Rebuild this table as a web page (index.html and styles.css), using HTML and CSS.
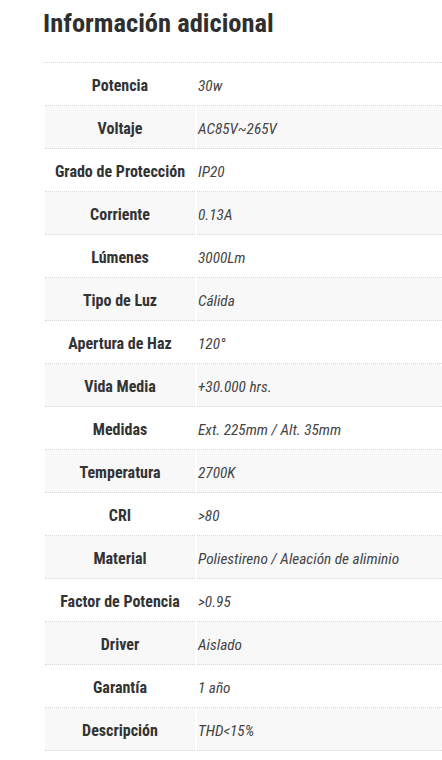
FILE: index.html
```html
<!DOCTYPE html>
<html lang="es">
<head>
<meta charset="utf-8">
<link rel="stylesheet" href="styles.css">
</head>
<body>
<div class="panel">
  <h2 class="title">Información adicional</h2>
  <table class="attrs">
    <tbody>
      <tr><th>Potencia</th><td>30w</td></tr>
      <tr class="alt"><th>Voltaje</th><td>AC85V~265V</td></tr>
      <tr><th>Grado de Protección</th><td>IP20</td></tr>
      <tr class="alt"><th>Corriente</th><td>0.13A</td></tr>
      <tr><th>Lúmenes</th><td>3000Lm</td></tr>
      <tr class="alt"><th>Tipo de Luz</th><td>Cálida</td></tr>
      <tr><th>Apertura de Haz</th><td>120°</td></tr>
      <tr class="alt"><th>Vida Media</th><td>+30.000 hrs.</td></tr>
      <tr><th>Medidas</th><td>Ext. 225mm / Alt. 35mm</td></tr>
      <tr class="alt"><th>Temperatura</th><td>2700K</td></tr>
      <tr><th>CRI</th><td>&gt;80</td></tr>
      <tr class="alt"><th>Material</th><td>Poliestireno / Aleación de aliminio</td></tr>
      <tr><th>Factor de Potencia</th><td>&gt;0.95</td></tr>
      <tr class="alt"><th>Driver</th><td>Aislado</td></tr>
      <tr><th>Garantía</th><td>1 año</td></tr>
      <tr class="alt"><th>Descripción</th><td>THD&lt;15%</td></tr>
    </tbody>
  </table>
</div>
</body>
</html>
```
FILE: styles.css
```css
html, body {
  margin: 0;
  padding: 0;
  background: #fff;
  overflow: hidden;
}
body {
  font-family: "Roboto Condensed", "Liberation Sans Narrow", Roboto, sans-serif;
  color: #333;
}
.panel {
  padding: 7px 0 0 43px;
}
.title {
  margin: 0 0 23px 0;
  font-size: 26.5px;
  line-height: 32px;
  font-weight: 700;
  color: #2f2f2f;
}
.attrs {
  width: 401px;
  border-collapse: separate;
  border-spacing: 2px 0;
  border-top: 1px dotted #d8d8d8;
}
.attrs th,
.attrs td {
  height: 39px;
  padding: 3px 0 0 0;
  border-bottom: 1px dotted #d8d8d8;
  vertical-align: middle;
}
.attrs th {
  width: 150px;
  text-align: center;
  font-size: 16px;
  font-weight: 700;
  color: #333;
}
.attrs td {
  text-align: left;
  font-size: 15.3px;
  font-style: italic;
  color: #444;
  padding-left: 1px;
}
.attrs tr.alt th,
.attrs tr.alt td {
  background: #f8f8f8;
}
```
